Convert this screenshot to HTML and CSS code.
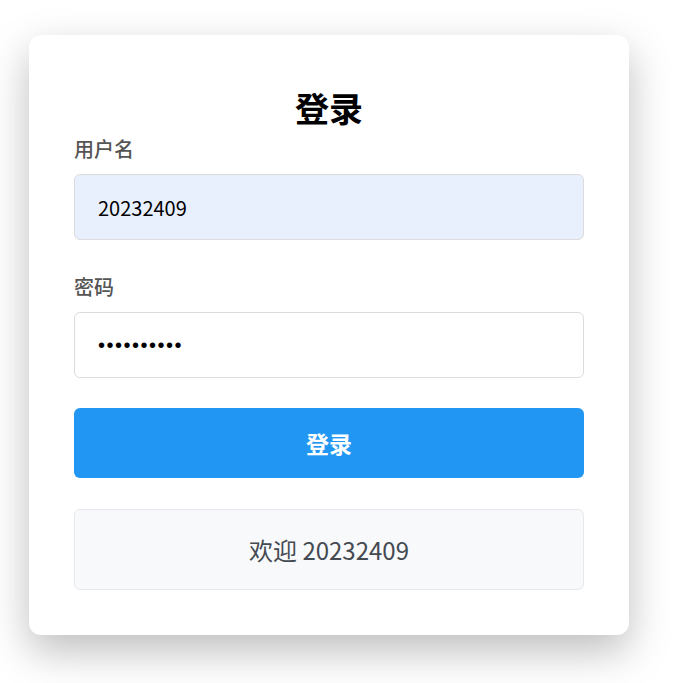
FILE: index.html
```html
<!DOCTYPE html>
<html lang="zh-CN">
<head>
<meta charset="utf-8">
<title>登录</title>
<link rel="stylesheet" href="styles.css">
</head>
<body>
<div class="card">
  <h1 class="title">登录</h1>
  <form class="form">
    <div class="group">
      <label class="label" for="u">用户名</label>
      <input class="input input-filled" id="u" type="text" value="20232409">
    </div>
    <div class="group">
      <label class="label" for="p">密码</label>
      <input class="input input-pass" id="p" type="password" value="1234567890">
    </div>
    <button class="btn" type="button">登录</button>
  </form>
  <div class="welcome">欢迎 20232409</div>
</div>
</body>
</html>
```
FILE: styles.css
```css
html, body {
  margin: 0;
  padding: 0;
  background: #ffffff;
}
body {
  font-family: "Noto Sans CJK SC", "Noto Sans", sans-serif;
  padding: 35px 0 48px 29px;
  min-height: 100vh;
  box-sizing: border-box;
}
.card {
  width: 600px;
  box-sizing: border-box;
  background: #fff;
  border-radius: 12px;
  padding: 45px 45px 45px 45px;
  box-shadow: 0 16px 42px rgba(0, 0, 0, 0.26);
}
.title {
  margin: 8px 0 9px;
  font-size: 34px;
  line-height: 40px;
  font-weight: 700;
  text-align: center;
  color: #000;
}
.form {
  display: flex;
  flex-direction: column;
}
.group {
  display: flex;
  flex-direction: column;
  margin-bottom: 35px;
}
.group + .group {
  margin-bottom: 30px;
}
.label {
  font-size: 20px;
  line-height: 24px;
  font-weight: 500;
  color: #555;
  margin-bottom: 13px;
}
.input {
  box-sizing: border-box;
  height: 66px;
  width: 100%;
  border: 1px solid #dcdcdc;
  border-radius: 6px;
  padding: 0 23px;
  font-family: "Noto Sans CJK SC", "Noto Sans", sans-serif;
  font-size: 20px;
  color: #000;
  background: #fff;
  outline: none;
}
.input-filled {
  background: #e8f0fe;
}
.input-pass {
  font-family: "Liberation Sans", sans-serif;
  letter-spacing: 1.5px;
}
.btn {
  height: 70px;
  border: none;
  border-radius: 6px;
  background: #2196f3;
  color: #fff;
  font-family: "Noto Sans CJK SC", "Noto Sans", sans-serif;
  font-size: 23px;
  font-weight: 700;
  cursor: pointer;
}
.welcome {
  margin-top: 31px;
  box-sizing: border-box;
  height: 81px;
  display: flex;
  align-items: center;
  justify-content: center;
  background: #f8f9fa;
  border: 1px solid #e6e8eb;
  border-radius: 6px;
  font-size: 24px;
  color: #444a52;
}
```
